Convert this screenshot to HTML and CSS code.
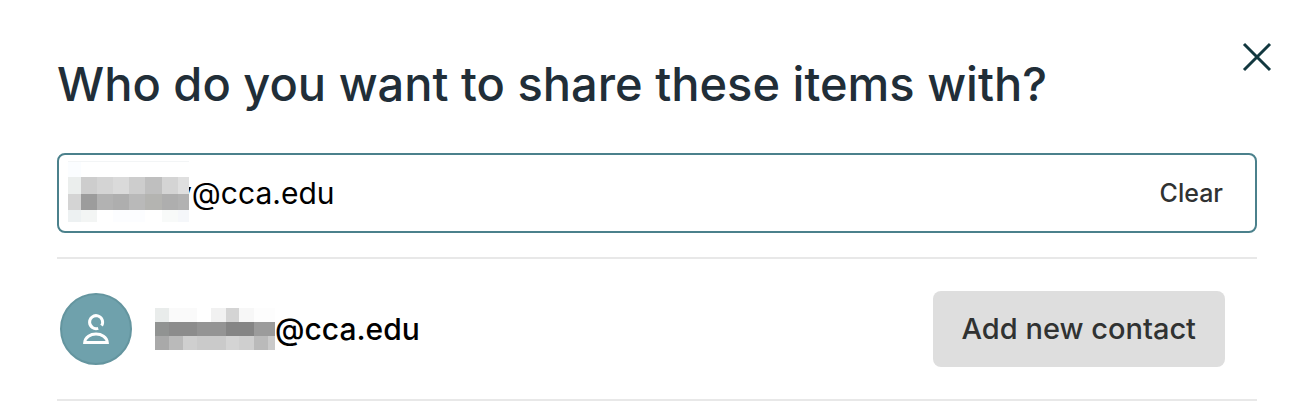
FILE: index.html
```html
<!DOCTYPE html>
<html lang="en">
<head>
  <meta charset="UTF-8">
  <meta name="viewport" content="width=device-width, initial-scale=1.0">
  <title>Share items</title>
  <link rel="stylesheet" href="styles.css">
</head>
<body>
  <main class="dialog">
    <button type="button" class="close" aria-label="Close">
      <svg width="30" height="30" viewBox="0 0 30 30"><path d="M2 2L28 28M28 2L2 28" fill="none" stroke="#12383f" stroke-width="3"/></svg>
    </button>
    <h1><label for="recipient">Who do you want to share these items with?</label></h1>

    <form class="field">
      <!-- hidden part of the address -->
      <svg class="mask" width="121" height="64" viewBox="0 0 121 64" shape-rendering="crispEdges" aria-hidden="true">
        <path fill="#fff" d="M0 0h121v61H0z"/>
        <path fill="#f3f5f6" d="M0 0h121v1H0z"/>
        <path fill="#fbfdff" d="M0 1h13v15H0z"/>
        <path fill="#ebeeed" d="M0 16h13v17H0z"/>
        <path fill="#cdcdcd" d="M13 16h16v17H13zM61 16h16v17H61z"/>
        <path fill="#d4d4d4" d="M29 16h16v17H29zM94 16h16v17H94zM0 33h13v16H0z"/>
        <path fill="#dadada" d="M45 16h16v17H45z"/>
        <path fill="#bfbfbf" d="M77 16h17v17H77z"/>
        <path fill="#dfdfdf" d="M110 16h11v17h-11z"/>
        <path fill="#9c9c9c" d="M13 33h16v16H13z"/>
        <path fill="#b2b2b2" d="M29 33h16v16H29zM110 33h11v16h-11z"/>
        <path fill="#aeaeae" d="M45 33h16v16H45zM94 33h16v16H94z"/>
        <path fill="#b9b9b9" d="M61 33h16v16H61z"/>
        <path fill="#b4b4b1" d="M77 33h17v16H77z"/>
        <path fill="#edf1f2" d="M0 49h13v12H0z"/>
        <path fill="#f3f5f4" d="M13 49h16v12H13z"/>
        <path fill="#fcfdff" d="M45 49h32v12H45z"/>
        <path fill="#f8faf9" d="M94 49h16v12H94z"/>
        <path fill="#f5f7fa" d="M110 49h11v12h-11z"/>
      </svg>
      <input type="text" id="recipient" value="y@cca.edu">
      <button type="reset" class="clear">Clear</button>
    </form>

    <ul class="contacts">
      <li class="contact">
        <span class="avatar">
          <svg width="28" height="32" viewBox="0 0 28 32" fill="none" stroke="#fff" stroke-width="3">
            <path d="M19.6 12.6A6.5 6.5 0 1 0 16.2 15.3"/>
            <path d="M2.7 29.5h22.6C24.5 18.3 3.5 18.3 2.7 29.5z"/>
          </svg>
        </span>
        <span class="email">
          <svg width="120" height="42" viewBox="0 0 120 42" shape-rendering="crispEdges" aria-hidden="true">
            <path fill="#e9eceb" d="M0 0h14v14H0z"/>
            <path fill="#fafafa" d="M14 0h28v14H14z"/>
            <path fill="#f1f1f1" d="M56 0h15v14H56z"/>
            <path fill="#d4d4d4" d="M71 0h13v14H71zM71 28h13v14H71z"/>
            <path fill="#f7f7f7" d="M84 0h15v14H84z"/>
            <path fill="#fdfdfd" d="M99 0h21v14H99z"/>
            <path fill="#919392" d="M0 14h14v14H0z"/>
            <path fill="#8c8c8c" d="M14 14h28v14H14z"/>
            <path fill="#949494" d="M42 14h29v14H42z"/>
            <path fill="#858585" d="M71 14h28v14H71z"/>
            <path fill="#9b9b9b" d="M99 14h21v14H99z"/>
            <path fill="#a9a9a9" d="M0 28h14v14H0z"/>
            <path fill="#bababa" d="M14 28h14v14H14zM99 28h14v14H99z"/>
            <path fill="#cfcfcf" d="M28 28h14v14H28zM84 28h15v14H84z"/>
            <path fill="#cacaca" d="M42 28h29v14H42zM113 28h7v14h-7z"/>
          </svg>
          <span>@cca.edu</span>
        </span>
        <button type="button" class="add">Add new contact</button>
      </li>
    </ul>
  </main>
</body>
</html>
```
FILE: styles.css
```css
* {
  box-sizing: border-box;
}
body {
  margin: 0;
  background: #fff;
  font-family: Inter, "Liberation Sans", sans-serif;
  color: #000;
}
button {
  border: none;
  background: none;
  padding: 0;
  font-family: inherit;
  font-weight: 500;
  color: #303232;
  cursor: pointer;
}
svg {
  display: block;
  flex-shrink: 0;
}
.dialog {
  position: relative;
  padding: 54px 53px 0 57px;
}
.close {
  position: absolute;
  top: 42px;
  right: 38px;
}
h1 {
  margin: 0 0 39px;
  font-size: 47px;
  line-height: 60px;
  font-weight: 500;
  color: #212e38;
}
.field {
  display: flex;
  align-items: center;
  height: 80px;
  padding: 0 32px 0 9px;
  border: 2px solid #4b818c;
  border-radius: 8px;
}
.mask {
  position: relative;
  margin-right: -14px;
}
.field input {
  flex: 1;
  min-width: 0;
  height: 60px;
  padding: 0;
  border: none;
  outline: none;
  background: none;
  font-family: inherit;
  font-size: 30px;
  color: #000;
}
.clear {
  font-size: 25px;
}
.contacts {
  list-style: none;
  margin: 24px 0 0;
  padding: 0;
  border-top: 2px solid #e8e8e8;
}
.contact {
  display: flex;
  align-items: center;
  height: 142px;
  padding: 0 32px 0 3px;
  border-bottom: 2px solid #e8e8e8;
}
.avatar {
  display: flex;
  align-items: center;
  justify-content: center;
  width: 72px;
  height: 72px;
  margin-right: 23px;
  border: 2px solid #64959f;
  border-radius: 50%;
  background: #6fa1ac;
}
.email {
  display: flex;
  align-items: center;
  flex: 1;
  font-size: 30px;
  font-weight: 500;
}
.add {
  padding: 0 29px;
  border-radius: 8px;
  background: #dedede;
  font-size: 29px;
  line-height: 76px;
}
```
